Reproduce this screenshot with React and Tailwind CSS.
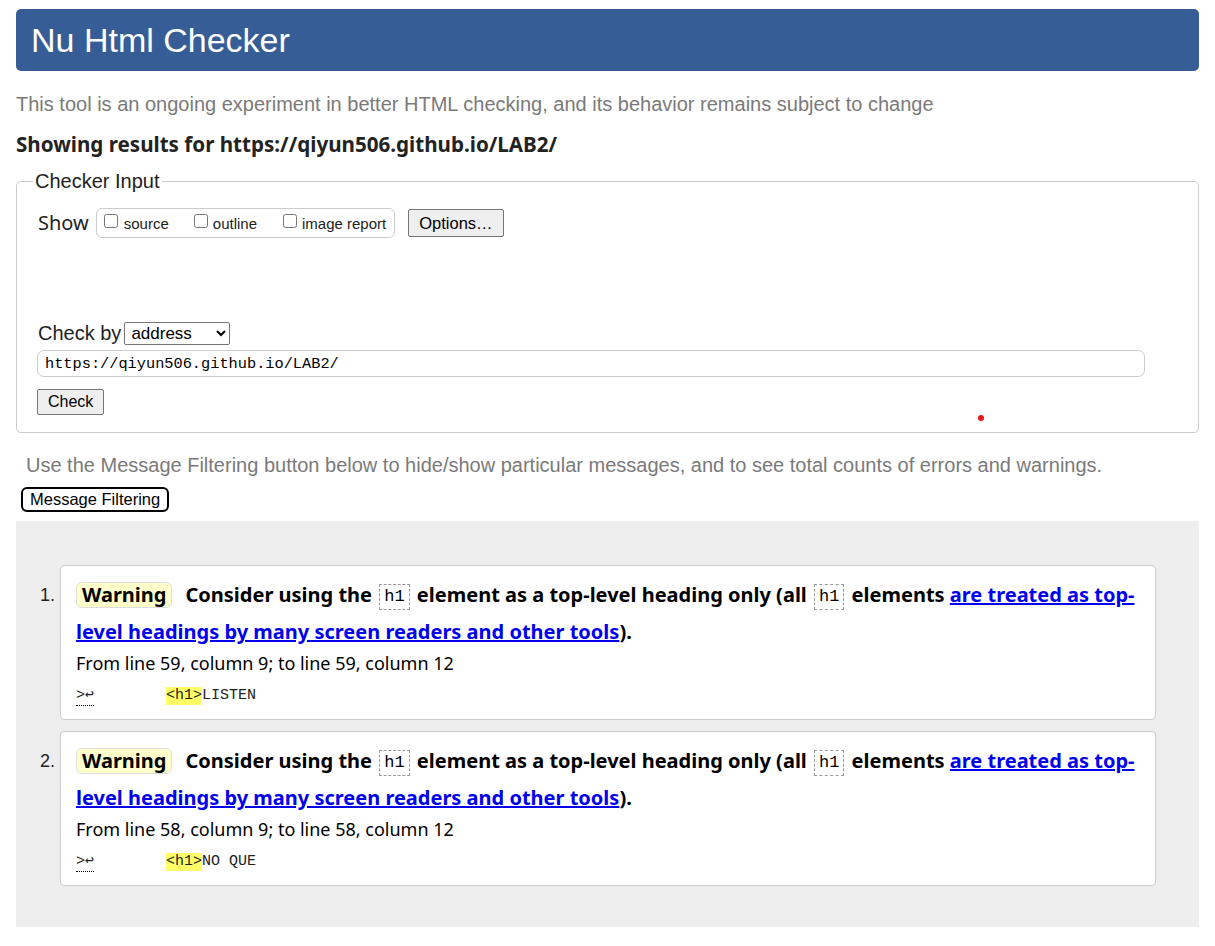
import React from "react";

const sans = "font-['Liberation_Sans',Arial,sans-serif]";
const ui = "font-['Noto_Sans','Open_Sans',sans-serif]";
const mono = "font-['Liberation_Mono',monospace]";

function CodeTag() {
  return (
    <code
      className={`${mono} inline-block border border-dashed border-[#999] px-[4px] mx-[2px] font-normal text-[17px] leading-[24px] align-[1px]`}
    >
      h1
    </code>
  );
}

function Message({ num, line, text }) {
  return (
    <li className="flex">
      <span className={`${sans} w-[44px] shrink-0 text-right pr-[5px] pt-[17px] text-[18px] text-[#222]`}>
        {num}.
      </span>
      <div className="flex-1 bg-white border border-[#ccc] rounded-[4px] pl-[15px] pr-[6px] pt-[10px] pb-[13px]">
        <p className={`${ui} font-bold text-[20px] leading-[37px] text-black`}>
          <span className="inline-block bg-[#ffffcc] border border-[#ddd] rounded-[6px] px-[5px] leading-[24px] mr-[13px]">
            Warning
          </span>
          Consider using the <CodeTag /> element as a top-level heading only (all <CodeTag /> elements{" "}
          <a href="#" className="text-[#0000ee] underline">
            are treated as top-level headings by many screen readers and other tools
          </a>
          ).
        </p>
        <p className={`${ui} text-[18px] leading-[26px] text-black`}>
          From line {line}, column 9; to line {line}, column 12
        </p>
        <p className={`${mono} text-[15px] leading-[18px] text-[#222] flex items-start mt-[11px]`}>
          <span className="border-b border-dotted border-black mr-[72px]">&gt;↩</span>
          <span className="bg-[#ffff66]">&lt;h1&gt;</span>
          <span>{text}</span>
        </p>
      </div>
    </li>
  );
}

export default function App() {
  return (
    <div className="bg-white min-h-[946px] px-[16px] pt-[9px]">
      <header className="bg-[#365d95] rounded-[5px] h-[62px] flex items-center px-[15px]">
        <h1 className={`${sans} text-white text-[34px] leading-none`}>Nu Html Checker</h1>
      </header>

      <p className={`${sans} text-[#7a7a7a] text-[20px] mt-[21px] leading-[24px]`}>
        This tool is an ongoing experiment in better HTML checking, and its behavior remains subject to change
      </p>
      <p className={`${ui} font-bold text-[20.6px] text-[#222] mt-[14px] leading-[28px]`}>
        Showing results for https://qiyun506.github.io/LAB2/
      </p>

      <fieldset className="mt-[12px] border border-[#ccc] rounded-[5px] h-[263px] px-[20px] relative">
        <legend className={`${sans} text-[20px] text-[#222] px-[2px] -ml-[4px] leading-[22px]`}>
          Checker Input
        </legend>
        <div className="flex items-center mt-[16px]">
          <span className={`${ui} text-[20px] text-[#222] mr-[7px] ml-[1px]`}>Show</span>
          <div className={`${sans} flex items-center border border-[#ccc] rounded-[6px] h-[30px] pl-[7px] pr-[8px] text-[15px] text-[#222]`}>
            <label className="flex items-center mr-[25px]">
              <input type="checkbox" className="w-[14px] h-[14px] mr-[6px] mt-[-4px]" />
              <span className="mt-[3px]">source</span>
            </label>
            <label className="flex items-center mr-[26px]">
              <input type="checkbox" className="w-[14px] h-[14px] mr-[5px] mt-[-4px]" />
              <span className="mt-[3px]">outline</span>
            </label>
            <label className="flex items-center">
              <input type="checkbox" className="w-[14px] h-[14px] mr-[5px] mt-[-4px]" />
              <span className="mt-[3px]">image report</span>
            </label>
          </div>
          <button className={`${sans} ml-[13px] h-[28px] px-[10px] border border-[#767676] rounded-[2px] bg-[#efefef] text-[16.5px] text-black`}>
            Options…
          </button>
        </div>

        <div className="flex items-center mt-[80px] ml-[1px]">
          <span className={`${sans} text-[20px] text-[#222] mr-[3px]`}>Check by</span>
          <select className={`${sans} w-[106px] h-[23px] border border-[#767676] rounded-[2px] text-[17px] px-[2px] text-black`}>
            <option>address</option>
          </select>
        </div>
        <input
          readOnly
          value="https://qiyun506.github.io/LAB2/"
          className={`${mono} mt-[2px] w-[1108px] h-[27px] border border-[#ccc] rounded-[7px] px-[7px] text-[15.3px] text-black outline-none`}
        />
        <div>
          <button className={`${sans} mt-[12px] h-[26px] px-[10px] border border-[#767676] rounded-[2px] bg-[#efefef] text-[16px] text-black`}>
            Check
          </button>
        </div>
        <span className="absolute left-[961px] top-[223px] w-[6px] h-[6px] rounded-full bg-[#e8141c]" />
      </fieldset>

      <p className={`${sans} text-[#7a7a7a] text-[20px] mt-[20px] ml-[10px] leading-[24px]`}>
        Use the Message Filtering button below to hide/show particular messages, and to see total counts of errors and warnings.
      </p>
      <button className={`${sans} mt-[10px] ml-[5px] h-[25px] px-[7px] border-2 border-black rounded-[6px] bg-white text-[16.5px] text-black leading-none`}>
        Message Filtering
      </button>

      <section className="mt-[9px] bg-[#eeeeee] rounded-t-[2px] h-[406px] pt-[44px] pr-[43px]">
        <ol className="flex flex-col gap-[11px]">
          <Message num={1} line={59} text="LISTEN" />
          <Message num={2} line={58} text="NO QUE" />
        </ol>
      </section>
    </div>
  );
}
